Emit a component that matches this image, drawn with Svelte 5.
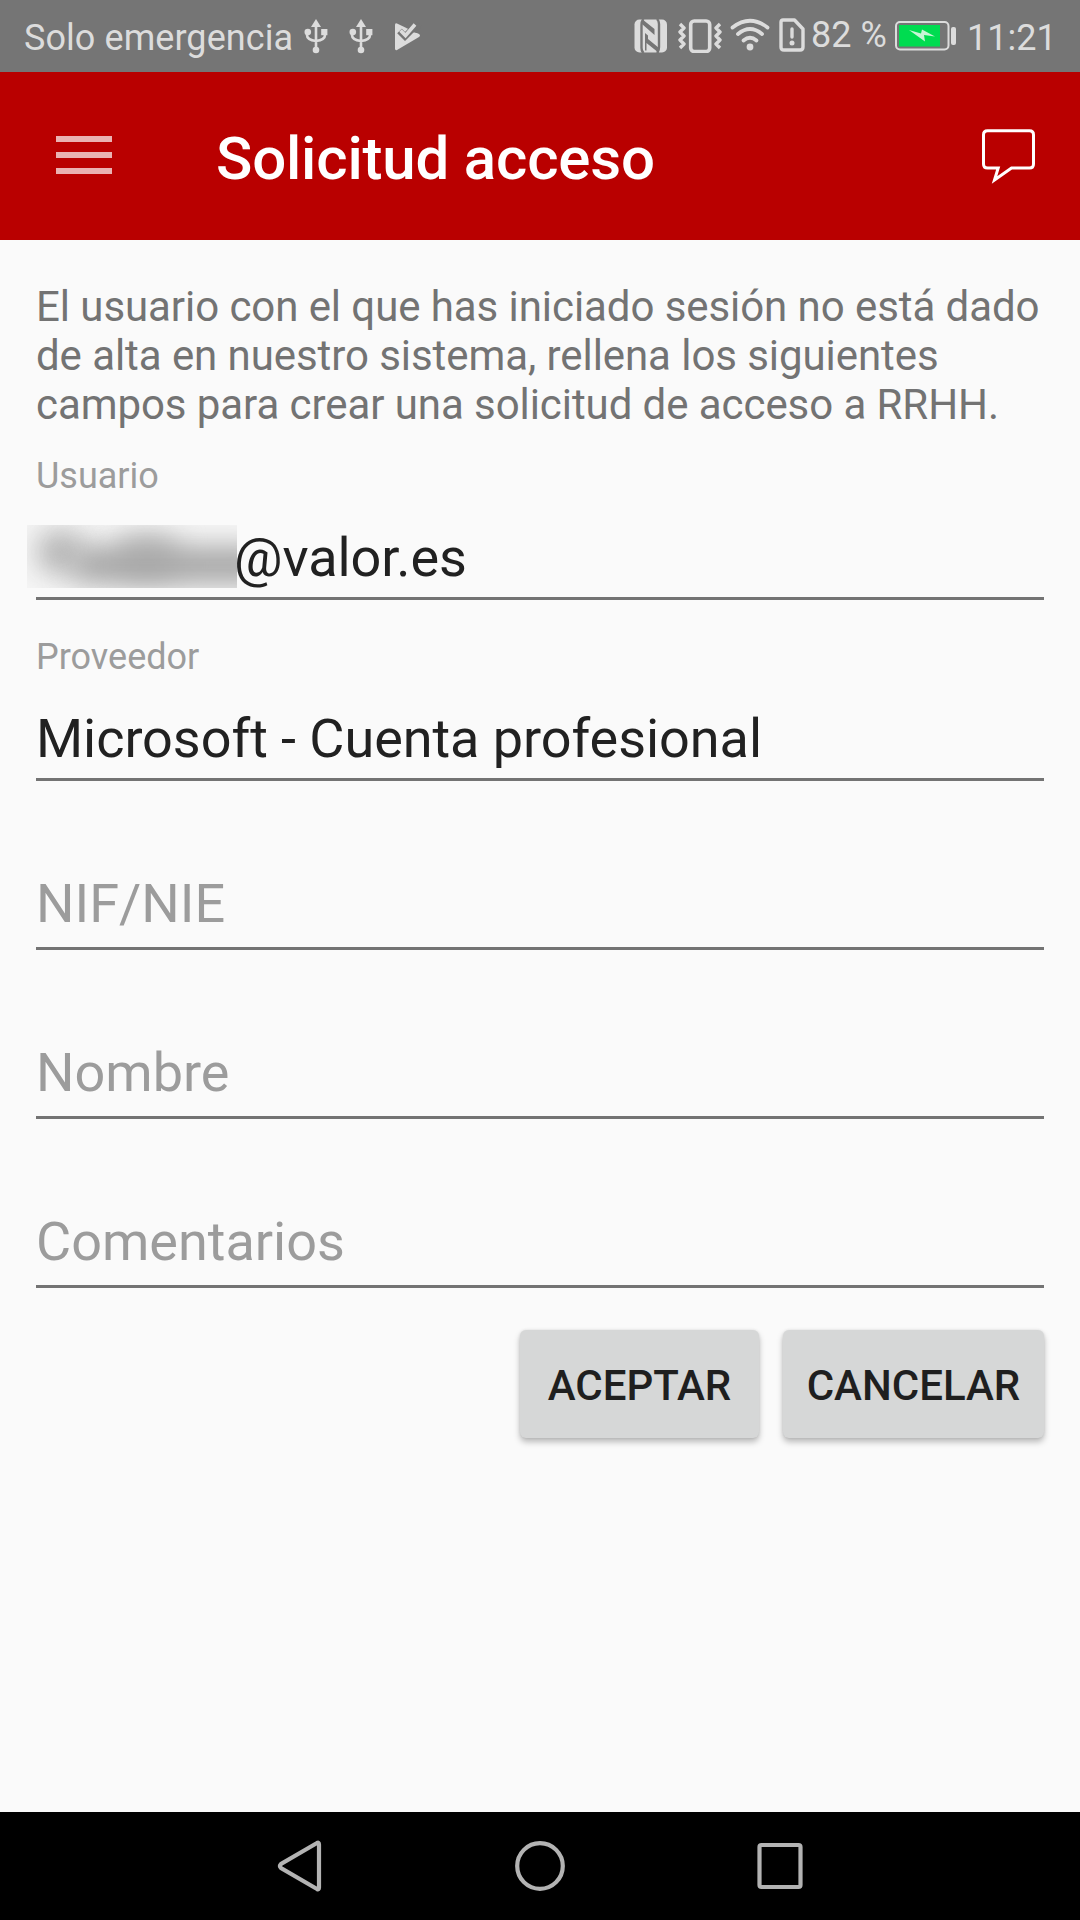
<script lang="ts">
  const fields = [
    { label: 'Usuario', value: '@valor.es', masked: true },
    { label: 'Proveedor', value: 'Microsoft - Cuenta profesional', masked: false },
  ];

  const emptyFields = ['NIF/NIE', 'Nombre', 'Comentarios'];
</script>

<div class="screen">
  <div class="status-bar">
    <span class="carrier">Solo emergencia</span>
    {#each [1, 2] as n (n)}
      <svg class="usb" width="24" height="36" viewBox="0 0 24 36">
        <path d="M12 7V31M3 14v3q0 5 9 6M21 14v3q0 5-9 6" fill="none" stroke="currentColor" stroke-width="2.6" />
        <path d="M12 1l5 8H7z" fill="currentColor" />
        <circle cx="3.8" cy="14" r="3.3" fill="currentColor" />
        <rect x="17.2" y="11" width="6.2" height="6.2" fill="currentColor" />
        <circle cx="12" cy="32" r="3.3" fill="currentColor" />
      </svg>
    {/each}
    <svg class="play" width="28" height="30" viewBox="0 0 28 30">
      <path d="M3 1.500L25 12q2 1.500 0 3L3 28q-2 .8-2-1.600V3q0-2.400 2-1.500z" fill="currentColor" />
      <path d="M12 6l4 2 5-8 7 3-5 8-5-1z" fill="#757575" />
      <path d="M5.500 9l5.500 5.500L22 3.500" fill="none" stroke="#757575" stroke-width="6.500" />
      <path d="M6.500 8.500l5 5L21 2.500" fill="none" stroke="currentColor" stroke-width="3.600" />
    </svg>

    <svg class="nfc" width="34" height="34" viewBox="0 0 34 34">
      <rect x="0.5" y="0.5" width="32.5" height="33" rx="5" fill="currentColor" />
      <path d="M9.500 0Q7.500 2 7.500 6v23q0 3 2 5M23 0q2 2 2 5v23q0 4-2 6" fill="none" stroke="#757575" stroke-width="2.400" />
      <path d="M8 0l12.500 10v6L8 5zM25 34L12.500 24v7.500h-1.500V14l3 2.500V20L25 29z" fill="#757575" />
    </svg>
    <svg class="vibrate" width="44" height="34" viewBox="0 0 44 34">
      <rect x="12.7" y="2" width="19" height="30.5" rx="3.5" fill="none" stroke="currentColor" stroke-width="3.6" />
      <path d="M2 5l4 4-4 4 4 4-4 4 4 4-4 4M42 5l-4 4 4 4-4 4 4 4-4 4 4 4" fill="none" stroke="currentColor" stroke-width="3.400" stroke-linejoin="round" />
    </svg>
    <svg class="wifi" width="40" height="34" viewBox="0 0 40 34">
      <g fill="none" stroke="currentColor" stroke-width="3.8" stroke-linecap="round">
        <path d="M2.5 9.500Q20-4 37.500 9.500" />
        <path d="M8 16Q20 6 32 16" />
        <path d="M13.500 22.500Q20 17 26.500 22.500" />
      </g>
      <circle cx="20" cy="29" r="3.4" fill="currentColor" />
    </svg>
    <svg class="sim" width="26" height="34" viewBox="0 0 26 34">
      <path d="M4 2h11.500l8.500 9v18q0 3-3 3H5q-3 0-3-3V4q0-2 2-2z" fill="none" stroke="currentColor" stroke-width="3.4" stroke-linejoin="round" />
      <path d="M13 11v8" stroke="currentColor" stroke-width="3.4" stroke-linecap="round" />
      <circle cx="13" cy="25" r="2.5" fill="currentColor" />
    </svg>
    <span class="percent">82 %</span>
    <svg class="battery" width="62" height="30" viewBox="0 0 62 30">
      <rect x="1" y="1" width="52.500" height="27.500" rx="4" fill="none" stroke="currentColor" stroke-width="2" />
      <rect x="4" y="4" width="41" height="21.500" fill="#00dc50" />
      <path d="M14 9l12 3.500 1-4 13 7-11-1.500 1 6.500z" fill="#c8f5d6" />
      <rect x="56" y="6" width="5" height="18" rx="2" fill="currentColor" />
    </svg>
    <span class="clock">11:21</span>
  </div>

  <header class="toolbar">
    <div class="menu" aria-label="Menú" role="img">
      <i></i><i></i><i></i>
    </div>
    <h1>Solicitud acceso</h1>
    <svg class="chat" width="54" height="56" viewBox="0 0 54 56">
      <path d="M6.500 1.700h42q4 0 4 4v29.300q0 4-4 4H30.500L13.500 51l3.700-12H6.500q-4 0-4-4V5.700q0-4 4-4z" fill="none" stroke="#fff" stroke-width="3" />
    </svg>
  </header>

  <main>
    <p class="intro">
      El usuario con el que has iniciado sesión no está dado<br />
      de alta en nuestro sistema, rellena los siguientes<br />
      campos para crear una solicitud de acceso a RRHH.
    </p>

    {#each fields as field (field.label)}
      <div class="field">
        <span class="label">{field.label}</span>
        <div class="value">
          {#if field.masked}
            <div class="mask"><i class="initial"></i><i class="middle"></i><i class="rest"></i></div>
          {/if}
          <span>{field.value}</span>
        </div>
      </div>
    {/each}

    {#each emptyFields as hint (hint)}
      <div class="field empty">{hint}</div>
    {/each}

    <div class="actions">
      <button class="accept">ACEPTAR</button>
      <button class="cancel">CANCELAR</button>
    </div>
  </main>

  <nav>
    <svg width="240" height="108" viewBox="0 0 240 108">
      <path d="M137 31q2-1 2 1.500v43q0 2.500-2 1.500L101 56q-2-2 0-4z" />
    </svg>
    <svg width="240" height="108" viewBox="0 0 240 108">
      <circle cx="120" cy="54" r="22.800" />
    </svg>
    <svg width="240" height="108" viewBox="0 0 240 108">
      <rect x="99.500" y="33" width="41" height="42" rx="2" />
    </svg>
  </nav>
</div>

<style>
  :global(body) {
    margin: 0;
  }

  .screen {
    display: flex;
    flex-direction: column;
    width: 1080px;
    height: 1920px;
    background: #fafafa;
    font-family: Roboto, sans-serif;
    overflow: hidden;
  }

  svg {
    display: block;
    flex: none;
  }

  .status-bar {
    display: flex;
    align-items: flex-start;
    height: 72px;
    background: #757575;
    color: #dcdcdc;
    font-size: 36px;
    line-height: 42px;
    white-space: nowrap;
  }

  .carrier {
    width: 280px;
    margin: 17px 0 0 24px;
    letter-spacing: 0.07px;
  }

  .usb {
    margin: 18px 21px 0 0;
  }

  .play {
    margin: 22px 0 0 0;
  }

  .nfc {
    margin: 19px 0 0 auto;
  }

  .vibrate {
    margin: 19px 0 0 10px;
  }

  .wifi {
    margin: 18px 0 0 8px;
  }

  .sim {
    margin: 18px 0 0 9px;
  }

  .percent {
    width: 84px;
    margin: 14px 0 0 6px;
  }

  .battery {
    margin: 21px 0 0 0;
  }

  .clock {
    width: 86px;
    margin: 17px 27px 0 10px;
  }

  .toolbar {
    display: flex;
    align-items: flex-start;
    height: 168px;
    background: #b90000;
  }

  .menu {
    display: flex;
    flex-direction: column;
    gap: 10px;
    width: 56px;
    margin: 64px 0 0 56px;
  }

  .menu i {
    height: 6px;
    background: #eab2b2;
  }

  h1 {
    margin: 52px 0 0 104px;
    color: #fff;
    font-size: 60px;
    font-weight: 500;
    letter-spacing: -0.18px;
    line-height: 70px;
  }

  .chat {
    margin: 57px 45px 0 auto;
  }

  main {
    flex: 1;
    padding: 42px 36px 0;
  }

  .intro {
    margin: 0 0 26px;
    color: #737373;
    font-size: 42px;
    letter-spacing: -0.07px;
    line-height: 49px;
    white-space: nowrap;
  }

  .field {
    border-bottom: 3px solid #737373;
  }

  .field + .field:not(.empty) {
    margin-top: 36px;
  }

  .label {
    display: block;
    color: #9c9c9c;
    font-size: 36px;
    line-height: 42px;
  }

  .value {
    display: flex;
    padding: 29px 0 7px;
    color: #212121;
    font-size: 54px;
    letter-spacing: -0.05px;
    line-height: 64px;
  }

  /* hides the account name */
  .mask {
    position: relative;
    width: 210px;
    height: 63px;
    margin: -1px -3px 0 -9px;
    overflow: hidden;
    background: #f6f6f6;
  }

  .mask i {
    position: absolute;
    border-radius: 16px;
    filter: blur(14px);
  }

  .initial {
    top: 6px;
    left: 10px;
    width: 46px;
    height: 42px;
    background: #b4b4b4;
  }

  .middle {
    top: 8px;
    left: 90px;
    width: 60px;
    height: 44px;
    background: #c0c0c0;
  }

  .rest {
    top: 22px;
    left: 44px;
    width: 200px;
    height: 36px;
    background: #a4a4a4;
  }

  .empty {
    padding: 91px 0 11px;
    color: #9c9c9c;
    font-size: 54px;
    line-height: 64px;
  }

  .actions {
    display: flex;
    justify-content: flex-end;
    gap: 24px;
    margin-top: 42px;
  }

  button {
    height: 108px;
    padding: 1px 0 0;
    border: 0;
    border-radius: 6px;
    background: #d6d7d7;
    box-shadow: 0 4px 6px rgba(0, 0, 0, 0.26), 0 0 3px rgba(0, 0, 0, 0.1);
    color: #1f1f1f;
    font: 500 42px/110px Roboto, sans-serif;
  }

  .accept {
    width: 239px;
  }

  .cancel {
    width: 261px;
  }

  nav {
    display: flex;
    justify-content: center;
    height: 108px;
    background: #000;
  }

  nav svg {
    fill: none;
    stroke: #b3b3b3;
    stroke-width: 4.2;
  }
</style>
